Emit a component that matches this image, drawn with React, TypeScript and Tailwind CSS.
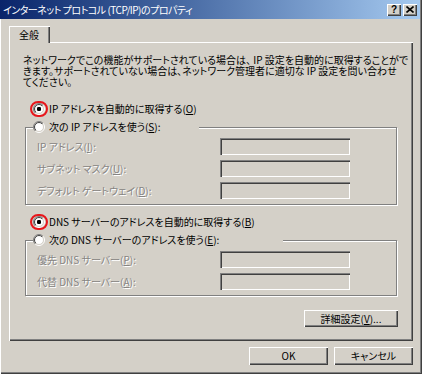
import React from "react";

const FONT = "font-['Noto_Sans_CJK_JP','Noto_Sans_CJK_SC',sans-serif] [font-feature-settings:'palt']";

function Radio({ checked }: { checked?: boolean }) {
  return (
    <svg width="12" height="12" viewBox="0 0 12 12" className="shrink-0 block">
      <defs>
        <linearGradient id="rdo" x1="0" y1="0" x2="1" y2="1">
          <stop offset="0.5" stopColor="#808080" />
          <stop offset="0.5" stopColor="#ffffff" />
        </linearGradient>
        <linearGradient id="rdi" x1="0" y1="0" x2="1" y2="1">
          <stop offset="0.5" stopColor="#404040" />
          <stop offset="0.5" stopColor="#d4d0c8" />
        </linearGradient>
      </defs>
      <circle cx="6" cy="6" r="5.5" fill="none" stroke="url(#rdo)" />
      <circle cx="6" cy="6" r="4.5" fill="#ffffff" stroke="url(#rdi)" />
      {checked && <rect x="4" y="4" width="4" height="4" rx="1.2" fill="#000000" />}
    </svg>
  );
}

function CircledRadio({ checked }: { checked?: boolean }) {
  return (
    <div className="relative">
      <Radio checked={checked} />
      <div className="absolute left-[-3px] top-[-2px] w-[18px] h-[16px] rounded-full border-2 border-[#e8161b]" />
    </div>
  );
}

const raised =
  "bg-[#d4d0c8] shadow-[inset_1px_1px_#ffffff,inset_-1px_-1px_#404040,inset_-2px_-2px_#808080]";
const sunken =
  "bg-[#d4d0c8] shadow-[inset_1px_1px_#808080,inset_2px_2px_#404040,inset_-1px_-1px_#ffffff,inset_-2px_-2px_#d4d0c8]";
const disabledText = "text-[#868482] [text-shadow:1px_1px_0_#ffffff]";

function FieldRow({ label }: { label: React.ReactNode }) {
  return (
    <div className="flex items-center h-[17px]">
      <span className={`w-[183px] whitespace-nowrap ${disabledText}`}>{label}</span>
      <div className={`w-[130px] h-[17px] ${sunken}`} />
    </div>
  );
}

export default function App() {
  return (
    <div
      className={`${FONT} w-[422px] h-[374px] bg-[#d4d0c8] text-black text-[10px] leading-[12px] flex flex-col shadow-[inset_1px_0_#ffffff,inset_-1px_-1px_#404040,inset_-2px_-2px_#808080] overflow-hidden`}
    >
      {/* Title bar */}
      <div className="w-[420px] h-[19px] shrink-0 flex items-center bg-gradient-to-r from-[#0a246a] to-[#a6caf0] pl-[3px] pr-[3px]">
        <span className="flex-1 text-white whitespace-nowrap tracking-[-0.5px]">
          インターネット プロトコル (TCP/IP)のプロパティ
        </span>
        <div className="flex gap-[2px]">
          <div className={`w-[14px] h-[12px] flex items-center justify-center ${raised}`}>
            <span className="font-['Liberation_Sans',sans-serif] font-bold text-[10px] leading-[10px] text-black">?</span>
          </div>
          <div className={`w-[14px] h-[12px] flex items-center justify-center ${raised}`}>
            <svg width="8" height="7" viewBox="0 0 8 7">
              <path d="M0.5 0.5 L7.5 6.5 M7.5 0.5 L0.5 6.5" stroke="#000" strokeWidth="1.6" />
            </svg>
          </div>
        </div>
      </div>

      {/* Tab */}
      <div className="ml-[9px] mt-[7px] w-[41px] h-[17px] relative z-10 bg-[#d4d0c8] border-t border-l border-white shadow-[inset_-1px_0_#404040,inset_-2px_0_#808080] flex items-center justify-center pr-[2px]">
        全般
      </div>

      {/* Panel */}
      <div className="-mt-[1px] ml-[9px] w-[404px] h-[299px] shrink-0 border-t border-l border-white shadow-[inset_-1px_-1px_#404040,inset_-2px_-2px_#808080] flex flex-col pt-[11px] pl-[15px] pr-[16px]">
        <p className="-ml-[2px] whitespace-nowrap leading-[11px]">
          ネットワークでこの機能がサポートされている場合は、 IP 設定を自動的に取得することがで
          <br />
          きます。サポートされていない場合は、ネットワーク管理者に適切な IP 設定を問い合わせ
          <br />
          てください。
        </p>

        <div className="mt-[15px] ml-[8px] h-[14px] flex items-center gap-[4px]">
          <CircledRadio checked />
          <span className="whitespace-nowrap">
            IP アドレスを自動的に取得する(<u>O</u>)
          </span>
        </div>

        {/* Group 1 */}
        <div className="mt-[11px] border border-[#808080] shadow-[1px_1px_#ffffff,inset_1px_1px_#ffffff] flex flex-col pb-[5px]">
          <div className="-mt-[8px] ml-[7px] w-[166px] h-[14px] bg-[#d4d0c8] flex items-center gap-[4px]">
            <Radio />
            <span className="whitespace-nowrap">
              次の IP アドレスを使う(<u>S</u>):
            </span>
          </div>
          <div className="mt-[4px] pl-[11px] flex flex-col gap-[5px]">
            <FieldRow label={<>IP アドレス(<u>I</u>):</>} />
            <FieldRow label={<>サブネット マスク(<u>U</u>):</>} />
            <FieldRow label={<>デフォルト ゲートウェイ(<u>D</u>):</>} />
          </div>
        </div>

        <div className="mt-[10px] ml-[8px] h-[14px] flex items-center gap-[4px]">
          <CircledRadio checked />
          <span className="whitespace-nowrap">
            DNS サーバーのアドレスを自動的に取得する(<u>B</u>)
          </span>
        </div>

        {/* Group 2 */}
        <div className="mt-[11px] border border-[#808080] shadow-[1px_1px_#ffffff,inset_1px_1px_#ffffff] flex flex-col pb-[5px]">
          <div className="-mt-[8px] ml-[7px] w-[250px] h-[14px] bg-[#d4d0c8] flex items-center gap-[4px]">
            <Radio />
            <span className="whitespace-nowrap">
              次の DNS サーバーのアドレスを使う(<u>E</u>):
            </span>
          </div>
          <div className="mt-[4px] pl-[11px] flex flex-col gap-[5px]">
            <FieldRow label={<>優先 DNS サーバー(<u>P</u>):</>} />
            <FieldRow label={<>代替 DNS サーバー(<u>A</u>):</>} />
          </div>
        </div>

        <div className="mt-[14px] self-end -mr-[1px]">
          <div className={`w-[94px] h-[17px] flex items-center justify-center whitespace-nowrap ${raised}`}>
            詳細設定(<u>V</u>)...
          </div>
        </div>
      </div>

      {/* Bottom buttons */}
      <div className="mt-[6px] flex justify-end gap-[6px] pr-[9px]">
        <div className={`w-[79px] h-[18px] flex items-center justify-center ${raised}`}>OK</div>
        <div className={`w-[79px] h-[18px] flex items-center justify-center ${raised}`}>キャンセル</div>
      </div>
    </div>
  );
}
